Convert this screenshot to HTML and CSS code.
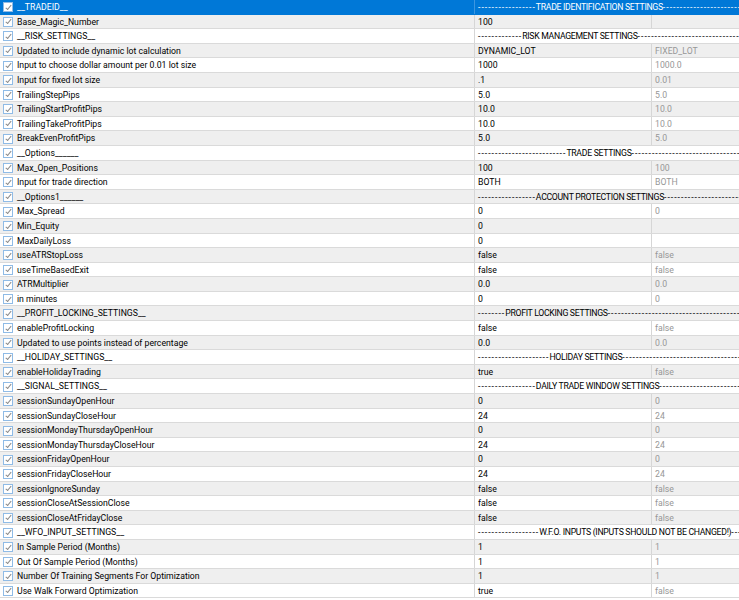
FILE: index.html
```html
<!DOCTYPE html>
<html>
<head>
<meta charset="utf-8">
<link rel="stylesheet" href="styles.css">
</head>
<body>
<div class="list">
  <div class="row hdr sel"><div class="name"><span class="cb"></span>__TRADEID__</div><div class="val span"><span class="dash">-----------------</span><span class="cap">TRADE IDENTIFICATION SETTINGS</span><span class="dash">----------------------------------------</span></div></div>
  <div class="row alt"><div class="name"><span class="cb"></span>Base_Magic_Number</div><div class="val">100</div><div class="def"></div></div>
  <div class="row hdr"><div class="name"><span class="cb"></span>__RISK_SETTINGS__</div><div class="val span"><span class="dash">-------------</span><span class="cap">RISK MANAGEMENT SETTINGS</span><span class="dash">----------------------------------------</span></div></div>
  <div class="row alt"><div class="name"><span class="cb"></span>Updated to include dynamic lot calculation</div><div class="val">DYNAMIC_LOT</div><div class="def">FIXED_LOT</div></div>
  <div class="row"><div class="name"><span class="cb"></span>Input to choose dollar amount per 0.01 lot size</div><div class="val">1000</div><div class="def">1000.0</div></div>
  <div class="row alt"><div class="name"><span class="cb"></span>Input for fixed lot size</div><div class="val">.1</div><div class="def">0.01</div></div>
  <div class="row"><div class="name"><span class="cb"></span>TrailingStepPips</div><div class="val">5.0</div><div class="def">5.0</div></div>
  <div class="row alt"><div class="name"><span class="cb"></span>TrailingStartProfitPips</div><div class="val">10.0</div><div class="def">10.0</div></div>
  <div class="row"><div class="name"><span class="cb"></span>TrailingTakeProfitPips</div><div class="val">10.0</div><div class="def">10.0</div></div>
  <div class="row alt"><div class="name"><span class="cb"></span>BreakEvenProfitPips</div><div class="val">5.0</div><div class="def">5.0</div></div>
  <div class="row hdr"><div class="name"><span class="cb"></span>__Options______</div><div class="val span"><span class="dash">--------------------------</span><span class="cap">TRADE SETTINGS</span><span class="dash">----------------------------------------</span></div></div>
  <div class="row alt"><div class="name"><span class="cb"></span>Max_Open_Positions</div><div class="val">100</div><div class="def">100</div></div>
  <div class="row"><div class="name"><span class="cb"></span>Input for trade direction</div><div class="val">BOTH</div><div class="def">BOTH</div></div>
  <div class="row hdr alt"><div class="name"><span class="cb"></span>__Options1______</div><div class="val span"><span class="dash">-----------------</span><span class="cap">ACCOUNT PROTECTION SETTINGS</span><span class="dash">----------------------------------------</span></div></div>
  <div class="row"><div class="name"><span class="cb"></span>Max_Spread</div><div class="val">0</div><div class="def">0</div></div>
  <div class="row alt"><div class="name"><span class="cb"></span>Min_Equity</div><div class="val">0</div><div class="def"></div></div>
  <div class="row"><div class="name"><span class="cb"></span>MaxDailyLoss</div><div class="val">0</div><div class="def"></div></div>
  <div class="row alt"><div class="name"><span class="cb"></span>useATRStopLoss</div><div class="val">false</div><div class="def">false</div></div>
  <div class="row"><div class="name"><span class="cb"></span>useTimeBasedExit</div><div class="val">false</div><div class="def">false</div></div>
  <div class="row alt"><div class="name"><span class="cb"></span>ATRMultiplier</div><div class="val">0.0</div><div class="def">0.0</div></div>
  <div class="row"><div class="name"><span class="cb"></span>in minutes</div><div class="val">0</div><div class="def">0</div></div>
  <div class="row hdr alt"><div class="name"><span class="cb"></span>__PROFIT_LOCKING_SETTINGS__</div><div class="val span"><span class="dash">--------</span><span class="cap">PROFIT LOCKING SETTINGS</span><span class="dash">--------------------------------------------------</span></div></div>
  <div class="row"><div class="name"><span class="cb"></span>enableProfitLocking</div><div class="val">false</div><div class="def">false</div></div>
  <div class="row alt"><div class="name"><span class="cb"></span>Updated to use points instead of percentage</div><div class="val">0.0</div><div class="def">0.0</div></div>
  <div class="row hdr"><div class="name"><span class="cb"></span>__HOLIDAY_SETTINGS__</div><div class="val span"><span class="dash">---------------------</span><span class="cap">HOLIDAY SETTINGS</span><span class="dash">----------------------------------------</span></div></div>
  <div class="row alt"><div class="name"><span class="cb"></span>enableHolidayTrading</div><div class="val">true</div><div class="def">false</div></div>
  <div class="row hdr"><div class="name"><span class="cb"></span>__SIGNAL_SETTINGS__</div><div class="val span"><span class="dash">-----------------</span><span class="cap">DAILY TRADE WINDOW SETTINGS</span><span class="dash">----------------------------------------</span></div></div>
  <div class="row alt"><div class="name"><span class="cb"></span>sessionSundayOpenHour</div><div class="val">0</div><div class="def">0</div></div>
  <div class="row"><div class="name"><span class="cb"></span>sessionSundayCloseHour</div><div class="val">24</div><div class="def">24</div></div>
  <div class="row alt"><div class="name"><span class="cb"></span>sessionMondayThursdayOpenHour</div><div class="val">0</div><div class="def">0</div></div>
  <div class="row"><div class="name"><span class="cb"></span>sessionMondayThursdayCloseHour</div><div class="val">24</div><div class="def">24</div></div>
  <div class="row alt"><div class="name"><span class="cb"></span>sessionFridayOpenHour</div><div class="val">0</div><div class="def">0</div></div>
  <div class="row"><div class="name"><span class="cb"></span>sessionFridayCloseHour</div><div class="val">24</div><div class="def">24</div></div>
  <div class="row alt"><div class="name"><span class="cb"></span>sessionIgnoreSunday</div><div class="val">false</div><div class="def">false</div></div>
  <div class="row"><div class="name"><span class="cb"></span>sessionCloseAtSessionClose</div><div class="val">false</div><div class="def">false</div></div>
  <div class="row alt"><div class="name"><span class="cb"></span>sessionCloseAtFridayClose</div><div class="val">false</div><div class="def">false</div></div>
  <div class="row hdr"><div class="name"><span class="cb"></span>__WFO_INPUT_SETTINGS__</div><div class="val span"><span class="dash">------------------</span><span class="cap">W.F.O. INPUTS (INPUTS SHOULD NOT BE CHANGED!)</span><span class="dash">-----</span></div></div>
  <div class="row alt"><div class="name"><span class="cb"></span>In Sample Period (Months)</div><div class="val">1</div><div class="def">1</div></div>
  <div class="row"><div class="name"><span class="cb"></span>Out Of Sample Period (Months)</div><div class="val">1</div><div class="def">1</div></div>
  <div class="row alt"><div class="name"><span class="cb"></span>Number Of Training Segments For Optimization</div><div class="val">1</div><div class="def">1</div></div>
  <div class="row"><div class="name"><span class="cb"></span>Use Walk Forward Optimization</div><div class="val">true</div><div class="def">false</div></div>
</div>
</body>
</html>
```
FILE: styles.css
```css
html, body {
  margin: 0;
  padding: 0;
  background: #ffffff;
  overflow: hidden;
}
body {
  font-family: Roboto, "Liberation Sans", Arial, sans-serif;
  font-size: 8.7px;
  color: #000000;
}
.list {
  display: flex;
  flex-direction: column;
  width: 739px;
}
.row {
  display: grid;
  grid-template-columns: 474px 177px 88px;
  height: 14.6px;
  box-sizing: border-box;
  border-bottom: 1px solid #dadada;
  background: #ffffff;
  line-height: 12.6px;
  white-space: nowrap;
}
.row.alt {
  background: #efefef;
}
.row.sel {
  background: #0078d7;
  color: #ffffff;
  border-bottom-color: #0078d7;
}
.name {
  display: flex;
  align-items: center;
  padding-left: 3px;
  padding-top: 1px;
  overflow: hidden;
}
.val, .def {
  padding-left: 3px;
  padding-top: 1px;
  border-left: 1px solid #d6d6d6;
  overflow: hidden;
}
.def {
  color: #979797;
}
.val.span {
  grid-column: 2 / 4;
}
.dash {
  letter-spacing: 1px;
}
.cap {
  letter-spacing: -0.3px;
}
.sel .val {
  border-left-color: #3d96e0;
}
.cb {
  width: 10px;
  height: 10px;
  box-sizing: border-box;
  border: 1px solid #8fbbe6;
  background: #ffffff;
  margin-right: 4px;
  position: relative;
  flex: none;
}
.cb::after {
  content: "";
  position: absolute;
  left: 2.8px;
  top: 0.4px;
  width: 2.4px;
  height: 4.8px;
  border-right: 1px solid #8a8a8a;
  border-bottom: 1px solid #8a8a8a;
  transform: rotate(40deg);
}
```
